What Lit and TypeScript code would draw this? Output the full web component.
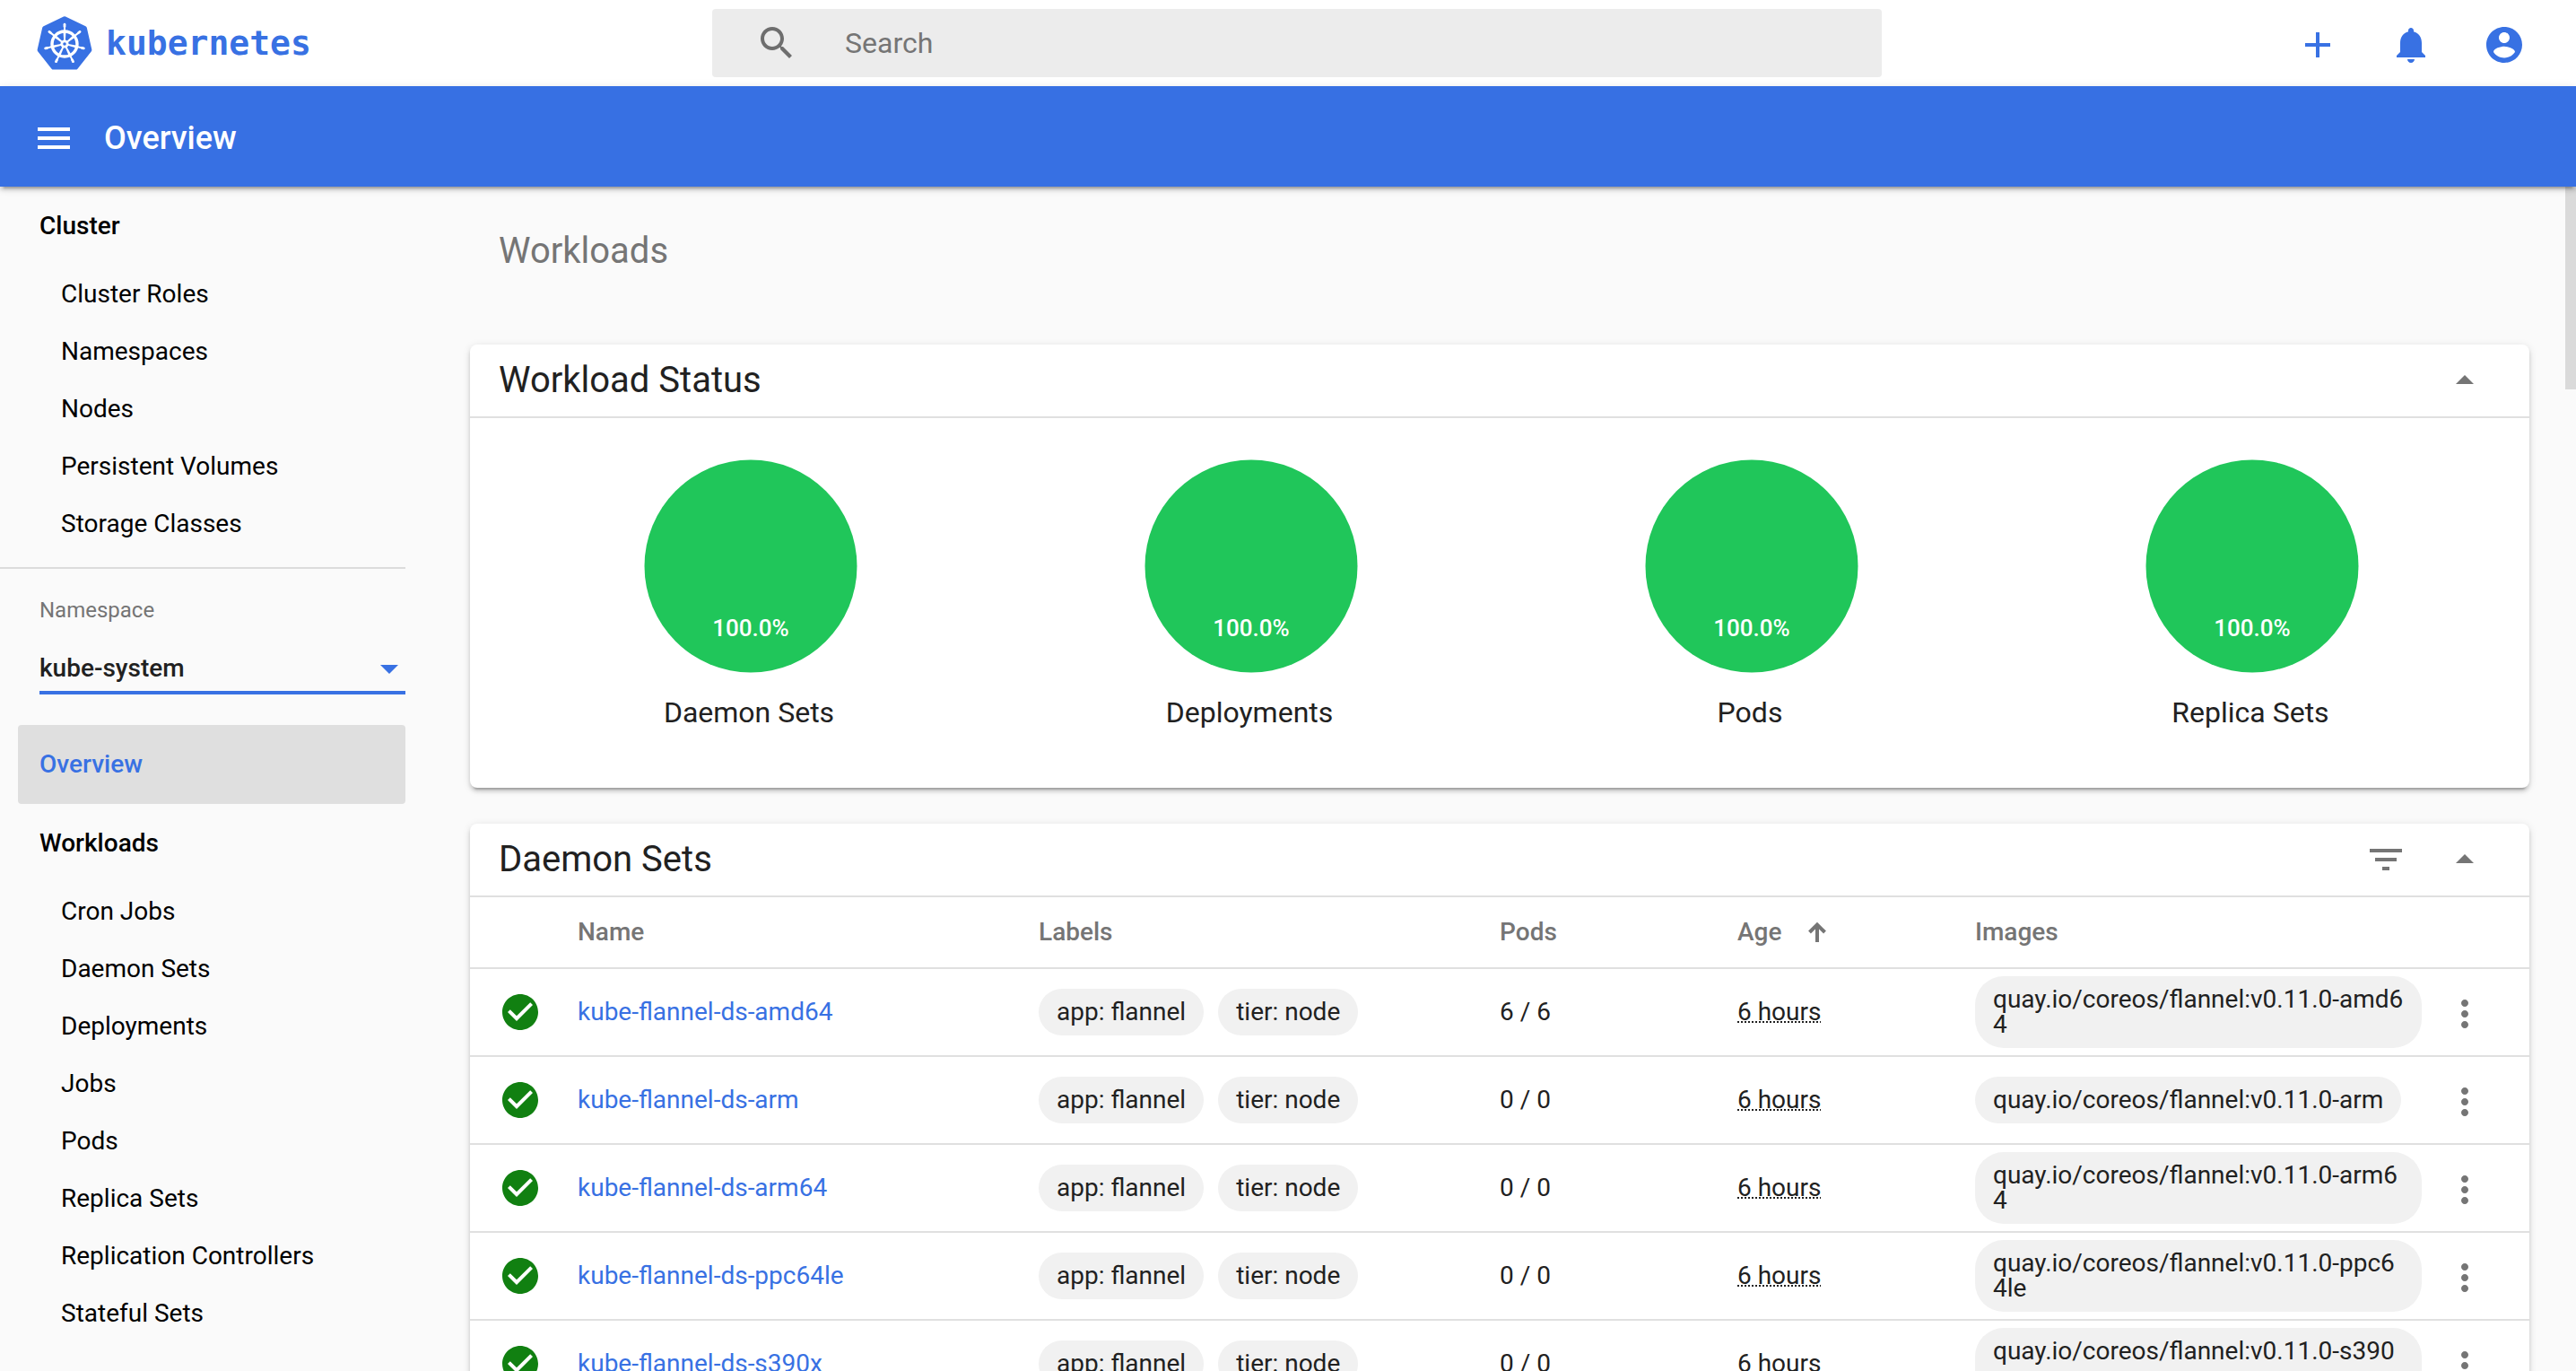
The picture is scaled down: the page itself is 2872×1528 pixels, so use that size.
import { LitElement, html, css, svg } from "lit";
import { customElement, property, state } from "lit/decorators.js";
import { classMap } from "lit/directives/class-map.js";

interface DaemonSet {
  name: string;
  pods: string;
  age: string;
  image: string;
}

const CLUSTER_ITEMS = ["Cluster Roles", "Namespaces", "Nodes", "Persistent Volumes", "Storage Classes"];

const WORKLOAD_ITEMS = [
  "Cron Jobs",
  "Daemon Sets",
  "Deployments",
  "Jobs",
  "Pods",
  "Replica Sets",
  "Replication Controllers",
  "Stateful Sets",
];

const STATUSES = ["Daemon Sets", "Deployments", "Pods", "Replica Sets"];

const ARCHES: Array<[string, string]> = [
  ["amd64", "6 / 6"],
  ["arm", "0 / 0"],
  ["arm64", "0 / 0"],
  ["ppc64le", "0 / 0"],
  ["s390x", "0 / 0"],
];

const DAEMON_SETS: DaemonSet[] = ARCHES.map(([arch, pods]) => ({
  name: `kube-flannel-ds-${arch}`,
  pods,
  age: "6 hours",
  image: `quay.io/coreos/flannel:v0.11.0-${arch}`,
}));

const ICONS: Record<string, string> = {
  search:
    "M15.5 14h-.79l-.28-.27C15.41 12.59 16 11.11 16 9.5 16 5.91 13.09 3 9.5 3S3 5.91 3 9.5 5.91 16 9.5 16c1.61 0 3.09-.59 4.23-1.57l.27.28v.79l5 4.99L20.49 19l-4.99-5zm-6 0C7.01 14 5 11.99 5 9.5S7.01 5 9.5 5 14 7.01 14 9.5 11.99 14 9.5 14z",
  add: "M19 13h-6v6h-2v-6H5v-2h6V5h2v6h6v2z",
  notifications:
    "M12 22c1.1 0 2-.9 2-2h-4c0 1.1.89 2 2 2zm6-6v-5c0-3.07-1.64-5.64-4.5-6.32V4c0-.83-.67-1.5-1.5-1.5s-1.5.67-1.5 1.5v.68C7.63 5.36 6 7.92 6 11v5l-2 2v1h16v-1l-2-2z",
  account:
    "M12 2C6.48 2 2 6.48 2 12s4.48 10 10 10 10-4.48 10-10S17.52 2 12 2zm0 3c1.66 0 3 1.34 3 3s-1.34 3-3 3-3-1.34-3-3 1.34-3 3-3zm0 14.2c-2.5 0-4.71-1.28-6-3.22.03-1.99 4-3.08 6-3.08 1.99 0 5.97 1.09 6 3.08-1.29 1.94-3.5 3.22-6 3.22z",
  menu: "M3 18h18v-2H3v2zm0-5h18v-2H3v2zm0-7v2h18V6H3z",
  collapse: "M7 14l5-5 5 5z",
  expand: "M7 10l5 5 5-5z",
  filter: "M10 18h4v-2h-4v2zM3 6v2h18V6H3zm3 7h12v-2H6v2z",
  more: "M12 8c1.1 0 2-.9 2-2s-.9-2-2-2-2 .9-2 2 .9 2 2 2zm0 2c-1.1 0-2 .9-2 2s.9 2 2 2 2-.9 2-2-.9-2-2-2zm0 6c-1.1 0-2 .9-2 2s.9 2 2 2 2-.9 2-2-.9-2-2-2z",
  check:
    "M12 2C6.48 2 2 6.48 2 12s4.48 10 10 10 10-4.48 10-10S17.52 2 12 2zm-2 15l-5-5 1.41-1.41L10 14.17l7.59-7.59L19 8l-9 9z",
};

@customElement("kd-icon")
export class KdIcon extends LitElement {
  @property() name = "";

  static styles = css`
    :host {
      display: block;
      width: 48px;
      height: 48px;
    }
    .glyph {
      display: block;
      width: 100%;
      height: 100%;
      fill: currentColor;
    }
  `;

  render() {
    return html`<svg class="glyph" viewBox="0 0 24 24" aria-hidden="true"><path d=${ICONS[this.name] ?? ""}></path></svg>`;
  }
}

@customElement("kd-logo")
export class KdLogo extends LitElement {
  static styles = css`
    :host {
      display: block;
    }
    .link {
      display: flex;
      align-items: center;
      gap: 14px;
      color: #3871e3;
      text-decoration: none;
    }
    .mark {
      display: block;
      width: 64px;
      height: 64px;
      flex: none;
    }
    .word {
      font: 700 38px/64px "DejaVu Sans Mono", monospace;
    }
  `;

  render() {
    const turns = [0, 1, 2, 3, 4, 5, 6].map((i) => (i * 360) / 7);
    return html`
      <a class="link" href="#/overview">
        <svg class="mark" viewBox="-32 -32 64 64" aria-hidden="true">
          <polygon
            points="0,-27.2 22.4,-16.5 27.9,7.7 12.5,27.1 -12.5,27.1 -27.9,7.7 -22.4,-16.5"
            fill="#3871e3"
            stroke="#3871e3"
            stroke-width="5"
            stroke-linejoin="round"
          ></polygon>
          <g fill="none" stroke="#fff">
            <circle cy="1" r="14" stroke-width="3.4"></circle>
            ${turns.map(
              (t) => svg`
                <g transform="translate(0 1) rotate(${t})">
                  <path d="M0 -15V-22" stroke-width="2" stroke-linecap="round"></path>
                  <path d="M0 -19.6V-21.8" stroke-width="2.8" stroke-linecap="round"></path>
                  <path d="M-1.5 -14L-.9 -4H.9L1.5 -14Z" fill="#fff" stroke="none"></path>
                </g>`,
            )}
          </g>
          <circle cy="1" r="4.6" fill="#fff"></circle>
          <circle cy="1" r="1.8" fill="#3871e3"></circle>
        </svg>
        <span class="word">kubernetes</span>
      </a>
    `;
  }
}

@customElement("kd-header")
export class KdHeader extends LitElement {
  static styles = css`
    :host {
      display: block;
      font-family: Roboto, sans-serif;
    }
    .top {
      display: grid;
      grid-template-columns: 27.65% 45.4% 1fr;
      align-items: center;
      height: 96px;
      background: #fff;
    }
    .logo {
      padding-left: 40px;
    }
    .search {
      display: flex;
      align-items: center;
      gap: 52px;
      height: 76px;
      padding: 0 48px;
      border-radius: 4px;
      background: #ececec;
      color: #6e6e6e;
    }
    .field {
      flex: 1;
      min-width: 0;
      height: 48px;
      padding: 0;
      border: 0;
      outline: 0;
      background: none;
      color: #212121;
      font: 400 32px/48px Roboto, sans-serif;
    }
    .field::placeholder {
      color: #757575;
      opacity: 1;
    }
    .actions {
      display: flex;
      justify-content: flex-end;
      gap: 24px;
      padding: 4px 40px 0 0;
    }
    .action {
      display: grid;
      place-items: center;
      width: 80px;
      height: 80px;
      padding: 0;
      border: 0;
      background: none;
      color: #3871e3;
      cursor: pointer;
    }
    .bar {
      display: flex;
      align-items: center;
      gap: 32px;
      position: relative;
      z-index: 1;
      height: 108px;
      padding: 4px 36px 0;
      background: #3770e3;
      color: #fff;
      box-shadow:
        0 6px 2px -4px rgba(0, 0, 0, 0.2),
        0 4px 4px rgba(0, 0, 0, 0.14),
        0 2px 10px rgba(0, 0, 0, 0.12);
    }
    .toggle {
      padding: 0;
      border: 0;
      background: none;
      color: inherit;
      cursor: pointer;
    }
    .title {
      margin: 0;
      font: 500 36px/44px Roboto, sans-serif;
    }
  `;

  render() {
    return html`
      <header class="top">
        <kd-logo class="logo"></kd-logo>
        <form class="search" role="search">
          <kd-icon name="search"></kd-icon>
          <input class="field" type="search" placeholder="Search" aria-label="Search" />
        </form>
        <div class="actions">
          <button class="action" type="button" aria-label="Create"><kd-icon name="add"></kd-icon></button>
          <button class="action" type="button" aria-label="Notifications">
            <kd-icon name="notifications"></kd-icon>
          </button>
          <button class="action" type="button" aria-label="Account"><kd-icon name="account"></kd-icon></button>
        </div>
      </header>
      <div class="bar">
        <button class="toggle" type="button" aria-label="Toggle navigation"><kd-icon name="menu"></kd-icon></button>
        <h1 class="title">Overview</h1>
      </div>
    `;
  }
}

@customElement("kd-nav")
export class KdNav extends LitElement {
  static styles = css`
    :host {
      display: block;
      font: 400 28px/64px Roboto, sans-serif;
      color: #000;
    }
    .heading {
      margin: 0;
      padding-left: 44px;
      font-size: 28px;
      font-weight: 500;
      line-height: 88px;
    }
    .list {
      margin: 0;
      padding: 0 0 0 68px;
      list-style: none;
    }
    .item,
    .current {
      display: block;
      color: inherit;
      text-decoration: none;
    }
    .namespace {
      margin-top: 16px;
      padding: 32px 0 0 44px;
      border-top: 2px solid #dcdcdc;
    }
    .label {
      display: block;
      color: #757575;
      font-size: 24px;
      line-height: 28px;
    }
    .picker {
      display: grid;
      align-items: center;
      margin-top: 26px;
      border-bottom: 4px solid #3871e3;
    }
    .select {
      grid-area: 1 / 1;
      width: 100%;
      height: 50px;
      padding: 0;
      border: 0;
      outline: 0;
      appearance: none;
      background: none;
      color: #212121;
      font: 500 28px/48px Roboto, sans-serif;
    }
    .caret {
      grid-area: 1 / 1;
      justify-self: end;
      margin-right: -6px;
      color: #3871e3;
      pointer-events: none;
    }
    .current {
      margin: 34px 0 0 20px;
      padding-left: 24px;
      border-radius: 4px;
      background: #dfdfdf;
      color: #3871e3;
      font-weight: 500;
      line-height: 88px;
    }
  `;

  private list(items: string[]) {
    return html`<ul class="list">
      ${items.map(
        (item) => html`<li><a class="item" href="#/${item.toLowerCase().replace(/ /g, "")}">${item}</a></li>`,
      )}
    </ul>`;
  }

  render() {
    return html`
      <nav>
        <h2 class="heading">Cluster</h2>
        ${this.list(CLUSTER_ITEMS)}
        <div class="namespace">
          <label class="label" for="namespace">Namespace</label>
          <div class="picker">
            <select class="select" id="namespace">
              <option>kube-system</option>
            </select>
            <kd-icon class="caret" name="expand"></kd-icon>
          </div>
        </div>
        <a class="current" href="#/overview" aria-current="page">Overview</a>
        <h2 class="heading">Workloads</h2>
        ${this.list(WORKLOAD_ITEMS)}
      </nav>
    `;
  }
}

@customElement("kd-card")
export class KdCard extends LitElement {
  @property() heading = "";
  @property({ type: Boolean }) filterable = false;
  @state() private open = true;

  static styles = css`
    :host {
      display: block;
      border-radius: 8px;
      background: #fff;
      box-shadow:
        0 6px 2px -4px rgba(0, 0, 0, 0.2),
        0 4px 4px rgba(0, 0, 0, 0.14),
        0 2px 10px rgba(0, 0, 0, 0.12);
      color: #212121;
      font-family: Roboto, sans-serif;
    }
    .head {
      display: flex;
      align-items: center;
      gap: 40px;
      height: 80px;
      padding: 0 48px 0 32px;
      border-bottom: 2px solid #e0e0e0;
    }
    .heading {
      flex: 1;
      margin: 0;
      font-size: 40px;
      font-weight: 400;
      line-height: 48px;
    }
    .tool {
      padding: 0;
      border: 0;
      background: none;
      color: #757575;
      cursor: pointer;
    }
    .closed {
      display: none;
    }
  `;

  render() {
    return html`
      <div class="head">
        <h3 class="heading">${this.heading}</h3>
        ${this.filterable
          ? html`<button class="tool" type="button" aria-label="Filter"><kd-icon name="filter"></kd-icon></button>`
          : null}
        <button
          class="tool"
          type="button"
          aria-label="Toggle ${this.heading}"
          aria-expanded=${this.open ? "true" : "false"}
          @click=${() => (this.open = !this.open)}
        >
          <kd-icon name=${this.open ? "collapse" : "expand"}></kd-icon>
        </button>
      </div>
      <div class=${classMap({ closed: !this.open })}><slot></slot></div>
    `;
  }
}

@customElement("kd-workload-status")
export class KdWorkloadStatus extends LitElement {
  static styles = css`
    :host {
      display: block;
      font-family: Roboto, sans-serif;
    }
    .charts {
      display: grid;
      grid-template-columns: repeat(4, 1fr);
      padding: 46px 32px 64px;
    }
    .chart {
      display: flex;
      flex-direction: column;
      align-items: center;
      gap: 24px;
      margin: 0;
    }
    .pie {
      display: block;
      width: 242px;
      height: 238px;
    }
    .percent {
      fill: #fff;
      font: 500 26px Roboto, sans-serif;
      text-anchor: middle;
    }
    .caption {
      font-size: 32px;
      line-height: 40px;
    }
  `;

  render() {
    return html`<div class="charts">
      ${STATUSES.map(
        (label) => html`<figure class="chart">
          <svg class="pie" viewBox="0 0 242 238">
            <circle cx="123" cy="119" r="118.5" fill="#20c65a"></circle>
            <text class="percent" x="123" y="197">100.0%</text>
          </svg>
          <figcaption class="caption">${label}</figcaption>
        </figure>`,
      )}
    </div>`;
  }
}

@customElement("kd-daemon-sets")
export class KdDaemonSets extends LitElement {
  static styles = css`
    :host {
      display: block;
    }
    .table {
      width: 100%;
      table-layout: fixed;
      border-collapse: separate;
      border-spacing: 0;
      color: #212121;
      font: 400 28px/28px Roboto, sans-serif;
    }
    .status-col {
      width: 120px;
    }
    .short-col {
      width: 11.54%;
    }
    .menu-col {
      width: 104px;
    }
    .head,
    .cell {
      padding: 0;
      border-bottom: 2px solid #e0e0e0;
      text-align: left;
      vertical-align: middle;
    }
    .head {
      height: 78px;
      color: #757575;
      font-weight: 500;
    }
    .cell {
      height: 96px;
    }
    .sort {
      display: flex;
      align-items: center;
      gap: 28px;
      padding: 0;
      border: 0;
      background: none;
      color: inherit;
      font: inherit;
      cursor: pointer;
    }
    .arrow {
      display: block;
      width: 24px;
      height: 24px;
      fill: none;
      stroke: currentColor;
      stroke-width: 4;
    }
    .ok {
      margin-left: 32px;
      color: #118011;
    }
    .name {
      color: #3871e3;
      text-decoration: none;
    }
    .chips {
      display: flex;
      gap: 16px;
      padding-right: 16px;
    }
    .chip {
      padding: 12px 20px;
      border-radius: 32px;
      background: #f1f1f1;
      word-break: break-all;
    }
    .age {
      text-decoration: underline dotted 2px;
    }
    .more {
      display: grid;
      place-items: center;
      width: 64px;
      padding: 4px 0 0;
      border: 0;
      background: none;
      color: #757575;
      cursor: pointer;
    }
  `;

  render() {
    return html`
      <table class="table">
        <colgroup>
          <col class="status-col" />
          <col />
          <col />
          <col class="short-col" />
          <col class="short-col" />
          <col />
          <col class="menu-col" />
        </colgroup>
        <thead>
          <tr>
            <th class="head"></th>
            <th class="head">Name</th>
            <th class="head">Labels</th>
            <th class="head">Pods</th>
            <th class="head" aria-sort="ascending">
              <button class="sort" type="button">
                Age
                <svg class="arrow" viewBox="0 0 24 24" aria-hidden="true">
                  <path d="M12 23V3M3.5 12L12 3.5L20.500 12"></path>
                </svg>
              </button>
            </th>
            <th class="head">Images</th>
            <th class="head"></th>
          </tr>
        </thead>
        <tbody>
          ${DAEMON_SETS.map(
            (ds) => html`<tr>
              <td class="cell"><kd-icon class="ok" name="check"></kd-icon></td>
              <td class="cell"><a class="name" href="#/daemonset/${ds.name}">${ds.name}</a></td>
              <td class="cell">
                <div class="chips"><span class="chip">app: flannel</span><span class="chip">tier: node</span></div>
              </td>
              <td class="cell">${ds.pods}</td>
              <td class="cell"><span class="age">${ds.age}</span></td>
              <td class="cell">
                <div class="chips"><span class="chip">${ds.image}</span></div>
              </td>
              <td class="cell">
                <button class="more" type="button" aria-label="Actions for ${ds.name}">
                  <kd-icon name="more"></kd-icon>
                </button>
              </td>
            </tr>`,
          )}
        </tbody>
      </table>
    `;
  }
}

@customElement("app-root")
export class AppRoot extends LitElement {
  static styles = css`
    :host {
      display: flex;
      flex-direction: column;
      height: 100vh;
      overflow: hidden;
      background: #fafafa;
      font-family: Roboto, sans-serif;
    }
    .header {
      position: relative;
      z-index: 1;
      flex: none;
    }
    .body {
      display: flex;
      position: relative;
      flex: 1;
      min-height: 0;
      overflow: hidden;
    }
    .nav {
      flex: none;
      width: 452px;
    }
    .content {
      flex: 1;
      min-width: 0;
      padding: 0 52px 0 72px;
    }
    .group {
      margin: 0;
      padding: 0 0 32px 32px;
      color: #757575;
      font-size: 40px;
      font-weight: 400;
      line-height: 144px;
    }
    .card {
      margin: 0 0 40px;
    }
    .thumb {
      position: absolute;
      top: 0;
      right: 0;
      width: 12px;
      height: 226px;
      background: #dadada;
    }
  `;

  render() {
    return html`
      <kd-header class="header"></kd-header>
      <div class="body">
        <kd-nav class="nav"></kd-nav>
        <main class="content">
          <h2 class="group">Workloads</h2>
          <kd-card class="card" heading="Workload Status"><kd-workload-status></kd-workload-status></kd-card>
          <kd-card class="card" heading="Daemon Sets" filterable><kd-daemon-sets></kd-daemon-sets></kd-card>
        </main>
        <div class="thumb"></div>
      </div>
    `;
  }
}
